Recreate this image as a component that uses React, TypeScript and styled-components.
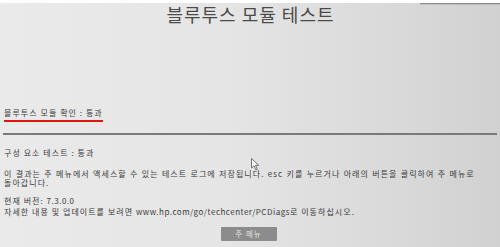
import React from "react";
import styled, { createGlobalStyle } from "styled-components";

const Global = createGlobalStyle`
  html, body { margin: 0; padding: 0; }
  body {
    width: 500px;
    height: 247px;
    overflow: hidden;
    font-family: "Noto Sans CJK KR", "Noto Sans", "Liberation Sans", sans-serif;
  }
`;

const Screen = styled.div`
  position: relative;
  width: 500px;
  height: 247px;
  box-sizing: border-box;
  padding: 0 3px 0 4px;
  background:
    linear-gradient(180deg, rgba(40,40,40,0.55) 0, rgba(40,40,40,0) 2px) right top / 80px 3px no-repeat,
    linear-gradient(90deg, #eaeaea 0%, #e5e5e5 45%, #d9d9d9 80%, #d1d1d1 100%);
  color: #3c3c3c;
`;

const Title = styled.h1`
  margin: 3px 0 0;
  height: 22px;
  line-height: 22px;
  font-size: 18px;
  font-weight: 400;
  letter-spacing: 1px;
  text-align: center;
  color: #4a4a4a;
`;

const Status = styled.div`
  display: inline-block;
  margin-top: 83px;
  padding-bottom: 2px;
  line-height: 10px;
  font-size: 8px;
  letter-spacing: 1.05px;
  color: #3a3a3a;
  border-bottom: 2px solid #e0141c;
`;

const Divider = styled.hr`
  margin: 11px 0 0 -1px;
  height: 2px;
  border: none;
  background: #7a7a7a;
`;

const Line = styled.p<{ $top: number; $lh: number; $ws?: number }>`
  margin: ${(p) => p.$top}px 0 0;
  max-width: 486px;
  font-size: 8px;
  line-height: ${(p) => p.$lh}px;
  letter-spacing: 1.05px;
  word-spacing: ${(p) => p.$ws ?? 0}px;
  word-break: keep-all;
  color: #3a3a3a;
`;

const Latin = styled.span`
  display: inline-block;
  line-height: inherit;
  letter-spacing: 0.5px;
`;

const ButtonRow = styled.div`
  display: flex;
  justify-content: center;
  margin-top: 10px;
  padding-right: 4px;
`;

const MenuButton = styled.button`
  width: 56px;
  height: 14px;
  padding: 0;
  border: none;
  border-radius: 1px;
  background: #8c8c8c;
  color: #e2e2e2;
  font-family: inherit;
  font-size: 7.5px;
  line-height: 14px;
  letter-spacing: 1px;
`;

const Cursor = styled.svg`
  position: absolute;
  left: 251px;
  top: 155px;
`;

export default function App() {
  return (
    <>
      <Global />
      <Screen>
        <Title>블루투스 모듈 테스트</Title>
        <Status>블루투스 모듈 확인 : 통과</Status>
        <Divider />
        <Line $top={13} $lh={10}>구성 요소 테스트 : 통과</Line>
        <Line $top={11} $lh={9} $ws={0.5}>
          이 결과는 주 메뉴에서 액세스할 수 있는 테스트 로그에 저장됩니다. esc 키를 누르거나 아래의 버튼을 클릭하여 주 메뉴로 돌아갑니다.
        </Line>
        <Line $top={8} $lh={11}>
          현재 버전: <Latin>7.3.0.0</Latin>
          <br />
          자세한 내용 및 업데이트를 보려면 <Latin>www.hp.com/go/techcenter/PCDiags</Latin>로 이동하십시오.
        </Line>
        <ButtonRow>
          <MenuButton>주 메뉴</MenuButton>
        </ButtonRow>
        <Cursor width="9" height="13" viewBox="0 0 9 13">
          <path d="M0.5 0.5 L0.5 10 L3 7.8 L4.8 11.8 L6.2 11.2 L4.5 7.3 L7.8 7.3 Z" fill="#f4f4f4" stroke="#555" strokeWidth="0.8" />
        </Cursor>
      </Screen>
    </>
  );
}
